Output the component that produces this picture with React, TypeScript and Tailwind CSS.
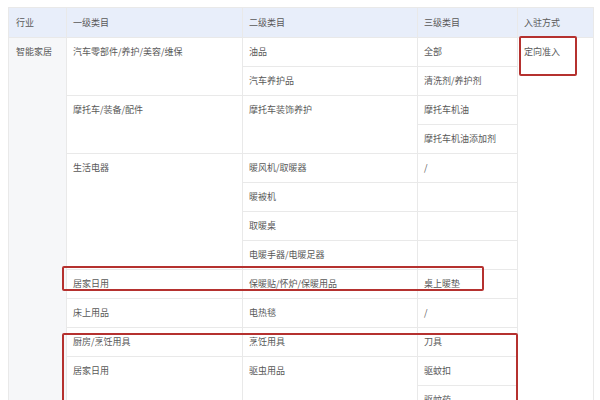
import React from 'react';

const font = { fontFamily: '"Noto Sans CJK SC", "Noto Sans", sans-serif' };

const td = 'border border-[#e9e9e9] align-top pt-[7px] pl-[6px] leading-[13px] text-[9px] text-[#585858] whitespace-nowrap overflow-hidden';

export default function App() {
  return (
    <div className="relative w-[600px] h-[400px] overflow-hidden bg-white" style={font}>
      <div className="pt-[7px] pl-[8px]">
        <table className="table-fixed border-collapse w-[585px]">
          <colgroup>
            <col className="w-[58px]" />
            <col className="w-[176px]" />
            <col className="w-[175px]" />
            <col className="w-[100px]" />
            <col className="w-[76px]" />
          </colgroup>
          <thead>
            <tr className="h-[30px] bg-[#e8eefa]">
              <th className={`${td} font-normal text-left pt-[8px] pl-[7px]`}>行业</th>
              <th className={`${td} font-normal text-left pt-[8px]`}>一级类目</th>
              <th className={`${td} font-normal text-left pt-[8px]`}>二级类目</th>
              <th className={`${td} font-normal text-left pt-[8px]`}>三级类目</th>
              <th className={`${td} font-normal text-left pt-[8px]`}>入驻方式</th>
            </tr>
          </thead>
          <tbody>
            <tr className="h-[29px]">
              <td className={`${td} bg-[#f6f7f9] pl-[7px]`} rowSpan={13}>智能家居</td>
              <td className={td} rowSpan={2}>汽车零部件/养护/美容/维保</td>
              <td className={td}>油品</td>
              <td className={td}>全部</td>
              <td className={td} rowSpan={13}>定向准入</td>
            </tr>
            <tr className="h-[29px]">
              <td className={td}>汽车养护品</td>
              <td className={td}>清洗剂/养护剂</td>
            </tr>
            <tr className="h-[29px]">
              <td className={td} rowSpan={2}>摩托车/装备/配件</td>
              <td className={td} rowSpan={2}>摩托车装饰养护</td>
              <td className={td}>摩托车机油</td>
            </tr>
            <tr className="h-[29px]">
              <td className={td}>摩托车机油添加剂</td>
            </tr>
            <tr className="h-[29px]">
              <td className={td} rowSpan={4}>生活电器</td>
              <td className={td}>暖风机/取暖器</td>
              <td className={td}>/</td>
            </tr>
            <tr className="h-[29px]">
              <td className={td}>暖被机</td>
              <td className={td}></td>
            </tr>
            <tr className="h-[29px]">
              <td className={td}>取暖桌</td>
              <td className={td}></td>
            </tr>
            <tr className="h-[29px]">
              <td className={td}>电暖手器/电暖足器</td>
              <td className={td}></td>
            </tr>
            <tr className="h-[29px]">
              <td className={td}>居家日用</td>
              <td className={td}>保暖贴/怀炉/保暖用品</td>
              <td className={td}>桌上暖垫</td>
            </tr>
            <tr className="h-[29px]">
              <td className={td}>床上用品</td>
              <td className={td}>电热毯</td>
              <td className={td}>/</td>
            </tr>
            <tr className="h-[29px]">
              <td className={td}>厨房/烹饪用具</td>
              <td className={td}>烹饪用具</td>
              <td className={td}>刀具</td>
            </tr>
            <tr className="h-[29px]">
              <td className={td} rowSpan={2}>居家日用</td>
              <td className={td} rowSpan={2}>驱虫用品</td>
              <td className={td}>驱蚊扣</td>
            </tr>
            <tr className="h-[29px]">
              <td className={td}>驱蚊药</td>
            </tr>
          </tbody>
        </table>
      </div>

      {/* red highlight boxes */}
      <div className="absolute left-[519px] top-[36px] w-[58px] h-[40px] border-2 border-[#b5312f] rounded-[2px]" />
      <div className="absolute left-[62px] top-[266px] w-[422px] h-[25px] border-2 border-[#b5312f] rounded-[2px]" />
      <div className="absolute left-[62px] top-[333px] w-[456px] h-[90px] border-2 border-[#b5312f] rounded-[2px]" />
    </div>
  );
}
